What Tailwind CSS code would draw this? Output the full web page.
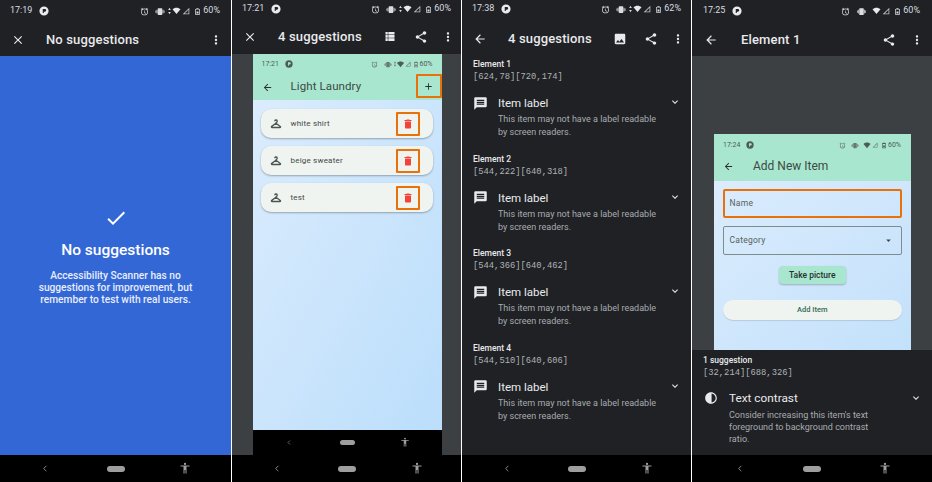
<!doctype html>
<html><head><meta charset="utf-8">
<script src="https://cdn.jsdelivr.net/npm/@tailwindcss/browser@4"></script>
</head>
<body class="m-0 bg-white">
<svg class="absolute w-0 h-0" aria-hidden="true"><defs>
<symbol id="close" viewBox="0 0 24 24"><path d="M19 6.41L17.59 5 12 10.59 6.41 5 5 6.41 10.59 12 5 17.59 6.41 19 12 13.41 17.59 19 19 17.59 13.41 12z"/></symbol>
<symbol id="more" viewBox="0 0 24 24"><path d="M12 8c1.1 0 2-.9 2-2s-.9-2-2-2-2 .9-2 2 .9 2 2 2zm0 2c-1.1 0-2 .9-2 2s.9 2 2 2 2-.9 2-2-.9-2-2-2zm0 6c-1.1 0-2 .9-2 2s.9 2 2 2 2-.9 2-2-.9-2-2-2z"/></symbol>
<symbol id="share" viewBox="0 0 24 24"><path d="M18 16.08c-.76 0-1.44.3-1.96.77L8.91 12.7c.05-.23.09-.46.09-.7s-.04-.47-.09-.7l7.05-4.11c.54.5 1.25.81 2.04.81 1.66 0 3-1.34 3-3s-1.34-3-3-3-3 1.34-3 3c0 .24.04.47.09.7L8.04 9.81C7.5 9.31 6.79 9 6 9c-1.66 0-3 1.34-3 3s1.34 3 3 3c.79 0 1.5-.31 2.04-.81l7.12 4.16c-.05.21-.08.43-.08.65 0 1.61 1.31 2.92 2.92 2.92 1.61 0 2.92-1.31 2.92-2.92s-1.31-2.92-2.92-2.92z"/></symbol>
<symbol id="back" viewBox="0 0 24 24"><path d="M20 11H7.83l5.59-5.59L12 4l-8 8 8 8 1.41-1.41L7.83 13H20v-2z"/></symbol>
<symbol id="expand" viewBox="0 0 24 24"><path d="M16.59 8.59L12 13.17 7.41 8.59 6 10l6 6 6-6z"/></symbol>
<symbol id="list" viewBox="0 0 24 24"><path d="M0 0h6v6.500H0zM7.500 0H24v6.500H7.500zM0 8h6v7H0zM7.500 8H24v7H7.500zM0 16.500h6V24H0zM7.500 16.500H24V24H7.500z"/></symbol>
<symbol id="image" viewBox="0 0 24 24"><path d="M21 19V5c0-1.100-.9-2-2-2H5c-1.100 0-2 .9-2 2v14c0 1.100.9 2 2 2h14c1.100 0 2-.9 2-2zM8.500 13.500l2.500 3.010L14.500 12l4.500 6H5l3.500-4.500z"/></symbol>
<symbol id="delete" viewBox="0 0 24 24"><path d="M6 19c0 1.100.9 2 2 2h8c1.100 0 2-.9 2-2V7H6v12zM19 4h-3.500l-1-1h-5l-1 1H5v2h14V4z"/></symbol>
<symbol id="add" viewBox="0 0 24 24"><path d="M19 13h-6v6h-2v-6H5v-2h6V5h2v6h6v2z"/></symbol>
<symbol id="chat" viewBox="0 0 24 24"><path d="M20 2H4c-1.100 0-2 .9-2 2v18l4-4h14c1.100 0 2-.9 2-2V4c0-1.100-.9-2-2-2zm-2 12H6v-2h12v2zm0-3H6V9h12v2zm0-3H6V6h12v2z"/></symbol>
<symbol id="check" viewBox="0 0 24 24"><path d="M9 16.170L4.830 12l-1.420 1.410L9 19 21 7l-1.410-1.410z"/></symbol>
<symbol id="contrast" viewBox="0 0 24 24"><path d="M12 22C6.500 22 2 17.500 2 12S6.500 2 12 2s10 4.500 10 10-4.500 10-10 10zm1-17.900v15.800c3.900-.5 7-3.900 7-7.900s-3.100-7.400-7-7.900z"/></symbol>
<symbol id="hanger" viewBox="0 0 24 24"><path fill="none" stroke="currentColor" stroke-width="2.600" d="M9.500 6.500a2.500 2.500 0 1 1 3.500 2.300c-.7.3-1 .8-1 1.700l8.600 6.300c1 .7.500 2.200-.7 2.200H4.100c-1.200 0-1.700-1.500-.7-2.200L12 10.500"/></symbol>
<symbol id="drop" viewBox="0 0 24 24"><path d="M7 10l5 5 5-5z"/></symbol>
<symbol id="person" viewBox="0 0 24 24"><path d="M12 1.500a2.300 2.300 0 1 1 0 4.600 2.300 2.300 0 0 1 0-4.600zM3 7h18v2h-6v14h-2v-7h-2v7H9V9H3z"/></symbol>
<symbol id="chev" viewBox="0 0 24 24"><path fill="none" stroke="currentColor" stroke-width="2.500" d="M16 4l-8 8 8 8"/></symbol>
<symbol id="pie" viewBox="0 0 24 24"><path fill-rule="evenodd" d="M12 1a11 11 0 1 1 0 22 11 11 0 0 1 0-22zM9 7v10h2.500v-3.500H14a3.200 3.200 0 0 0 0-6.500z"/></symbol>
<symbol id="alarm" viewBox="0 0 24 24"><path d="M22 5.700l-4.600-3.900-1.300 1.500 4.600 3.900zM7.900 3.400L6.600 1.900 2 5.700l1.300 1.500zM12 4a9 9 0 1 0 0 18 9 9 0 0 0 0-18zm0 16a7 7 0 1 1 0-14 7 7 0 0 1 0 14zm.5-11H11v6l4.700 2.800.8-1.200-4-2.400z"/></symbol>
<symbol id="vib" viewBox="0 0 24 24"><path d="M0 15h2V9H0zm3 2h2V7H3zm19-8v6h2V9zm-3 8h2V7h-2zM16.500 3h-9C6.700 3 6 3.700 6 4.500v15c0 .8.7 1.500 1.500 1.500h9c.8 0 1.500-.7 1.500-1.500v-15c0-.8-.7-1.500-1.500-1.500z"/></symbol>
<symbol id="arrows" viewBox="0 0 8 24"><path d="M4 2l4 7H0zM4 22l-4-7h8z"/></symbol>
<symbol id="wifi" viewBox="0 0 24 24"><path d="M12 21L0 7c3-3 7.500-5 12-5s9 2 12 5z"/></symbol>
<symbol id="signal" viewBox="0 0 24 24"><path fill-rule="evenodd" d="M22 2L2 22h20zM19.500 8v11.500H8z"/></symbol>
<symbol id="batt" viewBox="0 0 24 24"><path fill-rule="evenodd" d="M8 1h8v2h4v20H4V3h4zM6.500 5.500v15h11v-15zM8.500 12h7v6.500h-7z"/></symbol>
</defs></svg>

<div class="w-[932px] h-[482px] overflow-hidden flex gap-px font-['Roboto',sans-serif] bg-white">

<!-- Panel 1 -->
<section class="w-[231px] h-full flex flex-col bg-black shrink-0">
  <div class="h-[22px] bg-[#202124] pl-[10px] pr-[11px] flex items-center text-[#dadce0] text-[9px]">
    <span>17:19</span><svg class="w-[10px] h-[10px] ml-[7px] fill-[#e8eaed]"><use href="#pie"/></svg>
    <div class="ml-auto flex items-center"><svg class="w-[9px] h-[9px] fill-[#dadce0]"><use href="#alarm"/></svg><svg class="w-[10px] h-[9px] ml-[6px] fill-[#dadce0]"><use href="#vib"/></svg><svg class="w-[3px] h-[8px] ml-[3px] fill-[#dadce0]"><use href="#arrows"/></svg><svg class="w-[9px] h-[8px] ml-px fill-[#e8eaed]"><use href="#wifi"/></svg><svg class="w-[8px] h-[8px] ml-px fill-[#bdc1c6]"><use href="#signal"/></svg><svg class="w-[7px] h-[9px] ml-[4px] fill-[#dadce0]"><use href="#batt"/></svg><span class="ml-[2px]">60%</span></div>
  </div>
  <div class="h-[34px] bg-[#202124] pt-px pl-[11px] pr-[8px] flex items-center text-[#e8eaed]">
    <svg class="w-[14px] h-[14px] fill-[#e8eaed]"><use href="#close"/></svg>
    <span class="ml-[21px] text-[13px] font-medium tracking-[.15px]">No suggestions</span>
    <svg class="w-[14px] h-[14px] ml-auto fill-[#e8eaed]"><use href="#more"/></svg>
  </div>
  <div class="h-[399px] bg-[#3367d6] flex flex-col items-center text-white">
    <svg class="w-[24px] h-[24px] mt-[150px] fill-white"><use href="#check"/></svg>
    <h1 class="mt-[10px] text-[15.500px] leading-[20px] font-medium">No suggestions</h1>
    <p class="mt-[10px] w-[170px] text-center text-[10.200px] leading-[12px] font-medium text-[#e8eefb]">Accessibility Scanner has no suggestions for improvement, but remember to test with real users.</p>
  </div>
  <div class="h-[27px] bg-black relative flex items-center justify-center"><svg class="absolute left-[41px] top-[9px] w-[8px] h-[9px] text-[#9aa0a6]"><use href="#chev"/></svg><div class="w-[18px] h-[6px] rounded-full bg-[#9e9e9e]"></div><svg class="absolute left-[179px] top-[6px] w-[12px] h-[14px] fill-[#9e9e9e]"><use href="#person"/></svg></div>
</section>

<!-- Panel 2 -->
<section class="w-[229px] h-full flex flex-col bg-black shrink-0">
  <div class="h-[18px] bg-[#202124] pl-[10px] pr-[10px] flex items-center text-[#dadce0] text-[9px]">
    <span>17:21</span><svg class="w-[10px] h-[10px] ml-[7px] fill-[#e8eaed]"><use href="#pie"/></svg>
    <div class="ml-auto flex items-center"><svg class="w-[9px] h-[9px] fill-[#dadce0]"><use href="#alarm"/></svg><svg class="w-[10px] h-[9px] ml-[6px] fill-[#dadce0]"><use href="#vib"/></svg><svg class="w-[3px] h-[8px] ml-[3px] fill-[#dadce0]"><use href="#arrows"/></svg><svg class="w-[9px] h-[8px] ml-px fill-[#e8eaed]"><use href="#wifi"/></svg><svg class="w-[8px] h-[8px] ml-px fill-[#bdc1c6]"><use href="#signal"/></svg><svg class="w-[7px] h-[9px] ml-[4px] fill-[#dadce0]"><use href="#batt"/></svg><span class="ml-[2px]">60%</span></div>
  </div>
  <div class="h-[36px] bg-[#202124] pt-px pl-[11px] pr-[6px] flex items-center text-[#e8eaed]">
    <svg class="w-[14px] h-[14px] fill-[#e8eaed]"><use href="#close"/></svg>
    <span class="ml-[21px] text-[13px] font-medium tracking-[.15px]">4 suggestions</span>
    <svg class="w-[12px] h-[9px] ml-auto fill-[#e8eaed]" preserveAspectRatio="none"><use href="#list"/></svg>
    <svg class="w-[14px] h-[14px] ml-[18px] fill-[#e8eaed]"><use href="#share"/></svg>
    <svg class="w-[14px] h-[14px] ml-[13px] fill-[#e8eaed]"><use href="#more"/></svg>
  </div>
  <div class="h-[401px] bg-[#3c4043] flex justify-center">
    <div class="w-[189px] flex flex-col ml-[1px]">
      <div class="bg-[#a8e6cf]">
        <div class="h-[20px] pl-[9px] pr-[9px] flex items-center text-[#4f5b57] text-[7px]">
          <span>17:21</span><svg class="w-[8px] h-[8px] ml-[6px] fill-[#4f5b57]"><use href="#pie"/></svg>
          <div class="ml-auto flex items-center"><svg class="w-[7px] h-[7px] fill-[#6b7773]"><use href="#alarm"/></svg><svg class="w-[8px] h-[7px] ml-[6px] fill-[#6b7773]"><use href="#vib"/></svg><svg class="w-[2px] h-[6px] ml-[2px] fill-[#4f5b57]"><use href="#arrows"/></svg><svg class="w-[7px] h-[7px] ml-px fill-[#4f5b57]"><use href="#wifi"/></svg><svg class="w-[6px] h-[6px] ml-px fill-[#6b7773]"><use href="#signal"/></svg><svg class="w-[6px] h-[7px] ml-[2px] fill-[#6b7773]"><use href="#batt"/></svg><span class="ml-px">60%</span></div>
        </div>
        <div class="h-[26px] pl-[9px] flex items-center relative text-[#3c4a45]">
          <svg class="w-[11px] h-[11px] fill-[#26322e]"><use href="#back"/></svg>
          <span class="ml-[18px] text-[11.500px] tracking-[.1px]">Light Laundry</span>
          <div class="absolute right-0 top-0 w-[26px] h-[24px] border-2 border-[#e8710a] rounded-[1px] flex items-center justify-center"><svg class="w-[11px] h-[11px] fill-[#26322e]"><use href="#add"/></svg></div>
        </div>
      </div>
      <div class="flex-1 bg-linear-to-br from-[#dbecfd] to-[#bbdefb] pt-[9px] pl-[8.500px] pr-[9px] flex flex-col gap-[8px]">
        <div class="h-[29px] rounded-[10px] bg-[#f0f4f1] shadow-[0_1px_2px_rgba(0,0,0,.3)] flex items-center pl-[8.500px] pr-[13px] text-[#3f4a46] text-[8px] tracking-[.2px]"><svg class="w-[12px] h-[12px] text-[#4a5551]"><use href="#hanger"/></svg><span class="ml-[9px]">white shirt</span><div class="ml-auto w-[24px] h-[24px] border-2 border-[#e8710a] rounded-[1px] flex items-center justify-center"><svg class="w-[12px] h-[12px] fill-[#f44336]"><use href="#delete"/></svg></div></div>
        <div class="h-[29px] rounded-[10px] bg-[#f0f4f1] shadow-[0_1px_2px_rgba(0,0,0,.3)] flex items-center pl-[8.500px] pr-[13px] text-[#3f4a46] text-[8px] tracking-[.2px]"><svg class="w-[12px] h-[12px] text-[#4a5551]"><use href="#hanger"/></svg><span class="ml-[9px]">beige sweater</span><div class="ml-auto w-[24px] h-[24px] border-2 border-[#e8710a] rounded-[1px] flex items-center justify-center"><svg class="w-[12px] h-[12px] fill-[#f44336]"><use href="#delete"/></svg></div></div>
        <div class="h-[29px] rounded-[10px] bg-[#f0f4f1] shadow-[0_1px_2px_rgba(0,0,0,.3)] flex items-center pl-[8.500px] pr-[13px] text-[#3f4a46] text-[8px] tracking-[.2px]"><svg class="w-[12px] h-[12px] text-[#4a5551]"><use href="#hanger"/></svg><span class="ml-[9px]">test</span><div class="ml-auto w-[24px] h-[24px] border-2 border-[#e8710a] rounded-[1px] flex items-center justify-center"><svg class="w-[12px] h-[12px] fill-[#f44336]"><use href="#delete"/></svg></div></div>
      </div>
      <div class="h-[25px] bg-black relative flex items-center justify-center"><svg class="absolute left-[33px] top-[9px] w-[6px] h-[7px] text-[#9aa0a6]"><use href="#chev"/></svg><div class="w-[15px] h-[5px] rounded-full bg-[#9e9e9e]"></div><svg class="absolute left-[147px] top-[6px] w-[10px] h-[12px] fill-[#9e9e9e]"><use href="#person"/></svg></div>
    </div>
  </div>
  <div class="h-[27px] bg-black relative flex items-center justify-center"><svg class="absolute left-[41px] top-[9px] w-[8px] h-[9px] text-[#9aa0a6]"><use href="#chev"/></svg><div class="w-[18px] h-[6px] rounded-full bg-[#9e9e9e]"></div><svg class="absolute left-[179px] top-[6px] w-[12px] h-[14px] fill-[#9e9e9e]"><use href="#person"/></svg></div>
</section>

<!-- Panel 3 -->
<section class="w-[229px] h-full flex flex-col bg-black shrink-0">
  <div class="h-[18px] bg-[#202124] pl-[10px] pr-[10px] flex items-center text-[#dadce0] text-[9px]">
    <span>17:38</span><svg class="w-[10px] h-[10px] ml-[7px] fill-[#e8eaed]"><use href="#pie"/></svg>
    <div class="ml-auto flex items-center"><svg class="w-[9px] h-[9px] fill-[#dadce0]"><use href="#alarm"/></svg><svg class="w-[10px] h-[9px] ml-[6px] fill-[#dadce0]"><use href="#vib"/></svg><svg class="w-[3px] h-[8px] ml-[3px] fill-[#dadce0]"><use href="#arrows"/></svg><svg class="w-[9px] h-[8px] ml-px fill-[#e8eaed]"><use href="#wifi"/></svg><svg class="w-[8px] h-[8px] ml-px fill-[#bdc1c6]"><use href="#signal"/></svg><svg class="w-[7px] h-[9px] ml-[4px] fill-[#dadce0]"><use href="#batt"/></svg><span class="ml-[2px]">62%</span></div>
  </div>
  <div class="h-[40px] bg-[#202124] pt-px pl-[11px] pr-[6px] flex items-center text-[#e8eaed]">
    <svg class="w-[14px] h-[14px] fill-[#e8eaed]"><use href="#back"/></svg>
    <span class="ml-[21px] text-[13px] font-medium tracking-[.15px]">4 suggestions</span>
    <svg class="w-[14px] h-[14px] ml-auto fill-[#e8eaed]"><use href="#image"/></svg>
    <svg class="w-[14px] h-[14px] ml-[17px] fill-[#e8eaed]"><use href="#share"/></svg>
    <svg class="w-[14px] h-[14px] ml-[13px] fill-[#e8eaed]"><use href="#more"/></svg>
  </div>
  <div class="h-[397px] bg-[#202124] pl-[11px] pr-[10px] flex flex-col">
    <article class="h-[94.500px] shrink-0"><div class="text-[8.500px] leading-[12px] font-medium text-[#e8eaed]">Element 1</div><div class="font-['Liberation_Mono',monospace] text-[8.800px] leading-[12px] pt-px text-[#aeb2b7]">[624,78][720,174]</div><div class="mt-[12px] flex items-center"><svg class="w-[15px] h-[15px] fill-[#e8eaed]"><use href="#chat"/></svg><span class="ml-[10px] text-[11.500px] leading-[16px] text-[#e8eaed]">Item label</span><svg class="w-[12px] h-[12px] ml-auto -mt-[2px] fill-[#e8eaed]"><use href="#expand"/></svg></div><p class="ml-[25px] text-[9px] leading-[13px] text-[#a8acb1] mt-[2px]">This item may not have a label readable<br>by screen readers.</p></article>
    <article class="h-[94.500px] shrink-0"><div class="text-[8.500px] leading-[12px] font-medium text-[#e8eaed]">Element 2</div><div class="font-['Liberation_Mono',monospace] text-[8.800px] leading-[12px] pt-px text-[#aeb2b7]">[544,222][640,318]</div><div class="mt-[12px] flex items-center"><svg class="w-[15px] h-[15px] fill-[#e8eaed]"><use href="#chat"/></svg><span class="ml-[10px] text-[11.500px] leading-[16px] text-[#e8eaed]">Item label</span><svg class="w-[12px] h-[12px] ml-auto -mt-[2px] fill-[#e8eaed]"><use href="#expand"/></svg></div><p class="ml-[25px] text-[9px] leading-[13px] text-[#a8acb1] mt-[2px]">This item may not have a label readable<br>by screen readers.</p></article>
    <article class="h-[94.500px] shrink-0"><div class="text-[8.500px] leading-[12px] font-medium text-[#e8eaed]">Element 3</div><div class="font-['Liberation_Mono',monospace] text-[8.800px] leading-[12px] pt-px text-[#aeb2b7]">[544,366][640,462]</div><div class="mt-[12px] flex items-center"><svg class="w-[15px] h-[15px] fill-[#e8eaed]"><use href="#chat"/></svg><span class="ml-[10px] text-[11.500px] leading-[16px] text-[#e8eaed]">Item label</span><svg class="w-[12px] h-[12px] ml-auto -mt-[2px] fill-[#e8eaed]"><use href="#expand"/></svg></div><p class="ml-[25px] text-[9px] leading-[13px] text-[#a8acb1] mt-[2px]">This item may not have a label readable<br>by screen readers.</p></article>
    <article class="h-[94.500px] shrink-0"><div class="text-[8.500px] leading-[12px] font-medium text-[#e8eaed]">Element 4</div><div class="font-['Liberation_Mono',monospace] text-[8.800px] leading-[12px] pt-px text-[#aeb2b7]">[544,510][640,606]</div><div class="mt-[12px] flex items-center"><svg class="w-[15px] h-[15px] fill-[#e8eaed]"><use href="#chat"/></svg><span class="ml-[10px] text-[11.500px] leading-[16px] text-[#e8eaed]">Item label</span><svg class="w-[12px] h-[12px] ml-auto -mt-[2px] fill-[#e8eaed]"><use href="#expand"/></svg></div><p class="ml-[25px] text-[9px] leading-[13px] text-[#a8acb1] mt-[2px]">This item may not have a label readable<br>by screen readers.</p></article>
  </div>
  <div class="h-[27px] bg-black relative flex items-center justify-center"><svg class="absolute left-[41px] top-[9px] w-[8px] h-[9px] text-[#9aa0a6]"><use href="#chev"/></svg><div class="w-[18px] h-[6px] rounded-full bg-[#9e9e9e]"></div><svg class="absolute left-[179px] top-[6px] w-[12px] h-[14px] fill-[#9e9e9e]"><use href="#person"/></svg></div>
</section>

<!-- Panel 4 -->
<section class="w-[240px] h-full flex flex-col bg-black shrink-0">
  <div class="h-[22px] bg-[#202124] pl-[11px] pr-[12px] flex items-center text-[#dadce0] text-[9px]">
    <span>17:25</span><svg class="w-[10px] h-[10px] ml-[7px] fill-[#e8eaed]"><use href="#pie"/></svg>
    <div class="ml-auto flex items-center"><svg class="w-[9px] h-[9px] fill-[#dadce0]"><use href="#alarm"/></svg><svg class="w-[9px] h-[9px] ml-[7px] fill-[#dadce0]"><use href="#vib"/></svg><svg class="w-[9px] h-[8px] ml-[6px] fill-[#e8eaed]"><use href="#wifi"/></svg><svg class="w-[8px] h-[8px] ml-px fill-[#bdc1c6]"><use href="#signal"/></svg><svg class="w-[7px] h-[9px] ml-[4px] fill-[#dadce0]"><use href="#batt"/></svg><span class="ml-[2px]">60%</span></div>
  </div>
  <div class="h-[34px] bg-[#202124] pt-px pl-[12px] pr-[8px] flex items-center text-[#e8eaed]">
    <svg class="w-[14px] h-[14px] fill-[#e8eaed]"><use href="#back"/></svg>
    <span class="ml-[23px] text-[13px] font-medium tracking-[.15px]">Element 1</span>
    <svg class="w-[14px] h-[14px] ml-auto fill-[#e8eaed]"><use href="#share"/></svg>
    <svg class="w-[14px] h-[14px] ml-[14px] fill-[#e8eaed]"><use href="#more"/></svg>
  </div>
  <div class="h-[294px] bg-[#3c4043] pt-[78px] pl-[22px]">
    <div class="w-[197px] h-[216px] flex flex-col overflow-hidden">
      <div class="bg-[#a8e6cf] h-[47px] shrink-0">
        <div class="h-[22px] pl-[9px] pr-[10px] flex items-center text-[#4f5b57] text-[7px]">
          <span>17:24</span><svg class="w-[8px] h-[8px] ml-[6px] fill-[#4f5b57]"><use href="#pie"/></svg>
          <div class="ml-auto flex items-center"><svg class="w-[7px] h-[7px] fill-[#6b7773]"><use href="#alarm"/></svg><svg class="w-[8px] h-[7px] ml-[5px] fill-[#6b7773]"><use href="#vib"/></svg><svg class="w-[8px] h-[7px] ml-[4px] fill-[#4f5b57]"><use href="#wifi"/></svg><svg class="w-[6px] h-[6px] ml-px fill-[#6b7773]"><use href="#signal"/></svg><svg class="w-[6px] h-[7px] ml-[3px] fill-[#4f5b57]"><use href="#batt"/></svg><span class="ml-px">60%</span></div>
        </div>
        <div class="h-[20px] pl-[9px] flex items-center text-[#3c4a45]">
          <svg class="w-[11px] h-[11px] fill-[#26322e]"><use href="#back"/></svg>
          <span class="ml-[19px] text-[12px]">Add New Item</span>
        </div>
      </div>
      <div class="flex-1 bg-linear-to-br from-[#dbecfd] to-[#c3e1fb] pt-[8px] pl-[8.500px] pr-[9px] flex flex-col">
        <div class="h-[29px] shrink-0 rounded-[2px] border-2 border-[#e8710a] flex items-center pl-[5px] text-[8.500px] tracking-[.25px] text-[#55605c]">Name</div>
        <div class="mt-[8px] h-[29px] shrink-0 rounded-[2px] border border-[#7d8c8c] flex items-center pl-[6px] pr-[7px] text-[8.500px] tracking-[.25px] text-[#55605c]">Category<svg class="w-[11px] h-[11px] ml-auto fill-[#3c4a45]"><use href="#drop"/></svg></div>
        <div class="mt-[11px] self-center shrink-0 w-[67px] h-[18px] rounded-[4px] bg-[#a8e6cf] shadow-[0_1px_2px_rgba(0,0,0,.25)] flex items-center justify-center text-[8.500px] font-medium text-[#26322e]">Take picture</div>
        <div class="mt-[16px] h-[20px] shrink-0 rounded-full bg-[#f0f4f1] shadow-[0_1px_1px_rgba(0,0,0,.12)] flex items-center justify-center text-[7.500px] font-medium text-[#2f6b55]">Add Item</div>
      </div>
    </div>
  </div>
  <div class="h-[105px] bg-[#202124] pl-[11px] pr-[11px] pt-[4px]">
    <div class="text-[8.500px] leading-[12px] font-medium text-[#e8eaed]">1 suggestion</div>
    <div class="font-['Liberation_Mono',monospace] text-[8.800px] leading-[12px] pt-px text-[#aeb2b7]">[32,214][688,326]</div>
    <div class="mt-[11px] flex items-center"><svg class="w-[14px] h-[14px] fill-[#e8eaed] ml-px"><use href="#contrast"/></svg><span class="ml-[11px] text-[11.800px] leading-[16px] text-[#e8eaed]">Text contrast</span><svg class="w-[12px] h-[12px] ml-auto fill-[#e8eaed] -mr-px"><use href="#expand"/></svg></div>
    <p class="ml-[26px] w-[160px] text-[9px] leading-[12px] text-[#a8acb1] mt-[3px]">Consider increasing this item's text foreground to background contrast ratio.</p>
  </div>
  <div class="h-[27px] bg-black relative flex items-center justify-center"><svg class="absolute left-[44px] top-[9px] w-[8px] h-[9px] text-[#9aa0a6]"><use href="#chev"/></svg><div class="w-[18px] h-[6px] rounded-full bg-[#9e9e9e]"></div><svg class="absolute left-[187px] top-[6px] w-[12px] h-[14px] fill-[#9e9e9e]"><use href="#person"/></svg></div>
</section>
</div>
</body></html>
